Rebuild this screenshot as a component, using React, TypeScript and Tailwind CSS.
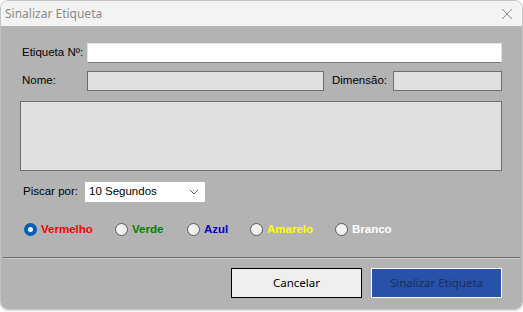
import React from 'react';

const labelFont = { fontFamily: '"Liberation Sans", Arial, sans-serif' };
const uiFont = { fontFamily: '"Noto Sans", "Open Sans", sans-serif' };

type Cor = { nome: string; cor: string; largura: string; marcado?: boolean };

const cores: Cor[] = [
  { nome: 'Vermelho', cor: 'text-[#ff0000]', largura: 'w-[91px]', marcado: true },
  { nome: 'Verde', cor: 'text-[#008000]', largura: 'w-[72px]' },
  { nome: 'Azul', cor: 'text-[#0000c8]', largura: 'w-[63px]' },
  { nome: 'Amarelo', cor: 'text-[#ffff00]', largura: 'w-[85px]' },
  { nome: 'Branco', cor: 'text-white', largura: 'w-[80px]' },
];

function Radio({ marcado }: { marcado?: boolean }): React.ReactElement {
  if (marcado) {
    return (
      <span className="flex h-[13px] w-[13px] items-center justify-center rounded-full bg-[#005fb8]">
        <span className="h-[5px] w-[5px] rounded-full bg-white" />
      </span>
    );
  }
  return <span className="h-[13px] w-[13px] rounded-full border border-[#5a5a5a] bg-[#f0f0f0]" />;
}

export default function App(): React.ReactElement {
  return (
    <div className="h-[312px] w-[523px] bg-white">
      <div className="flex h-[310px] w-[523px] flex-col overflow-hidden rounded-[8px] border border-[#c4c4c4] shadow-[0_1px_2px_rgba(0,0,0,0.15)]">
        {/* barra de título */}
        <div className="flex h-[25px] shrink-0 items-center justify-between bg-[#f3f3f3] pl-[4px] pr-[9px]">
          <span className="text-[12px] text-[#8a8a8a]" style={uiFont}>
            Sinalizar Etiqueta
          </span>
          <svg width="12" height="12" viewBox="0 0 12 12" className="mt-[1px]">
            <path d="M1 1 L11 11 M11 1 L1 11" stroke="#8a8a8a" strokeWidth="1" />
          </svg>
        </div>

        <div className="flex flex-1 flex-col bg-[#b3b3b3] text-[11.5px] text-black" style={labelFont}>
          <div className="flex flex-col pl-[19px] pr-[20px] pt-[17px]">
            <div className="flex h-[20px] items-center pl-[2px]">
              <span className="w-[65px]">Etiqueta Nº:</span>
              <div className="h-[20px] flex-1 border border-[#e2e2e2] border-b-[#7a7a7a] bg-white" />
            </div>

            <div className="mt-[8px] flex h-[20px] items-center pl-[2px]">
              <span className="w-[65px]">Nome:</span>
              <div className="h-[20px] w-[237px] border border-[#6e6e6e] bg-[#e0e0e0]" />
              <span className="ml-[8px] w-[61px]">Dimensão:</span>
              <div className="h-[20px] flex-1 border border-[#6e6e6e] bg-[#e0e0e0]" />
            </div>

            <div className="mt-[10px] h-[70px] border border-[#6e6e6e] bg-[#e0e0e0]" />

            <div className="mt-[11px] flex h-[20px] items-center pl-[3px]">
              <span className="w-[62px]">Piscar por:</span>
              <div className="flex h-[20px] w-[120px] items-center justify-between bg-white pl-[4px] pr-[6px]">
                <span>10 Segundos</span>
                <svg width="10" height="6" viewBox="0 0 10 6">
                  <path d="M1 1 L5 5 L9 1" fill="none" stroke="#606060" strokeWidth="1" />
                </svg>
              </div>
            </div>

            <div className="mt-[21px] flex h-[13px] items-center pl-[4px]">
              {cores.map((c) => (
                <div key={c.nome} className={`flex items-center ${c.largura}`}>
                  <Radio marcado={c.marcado} />
                  <span className={`ml-[4px] font-bold ${c.cor}`}>{c.nome}</span>
                </div>
              ))}
            </div>
          </div>

          <div className="mx-[2px] mt-[21px] border-t border-b border-t-[#6f6f6f] border-b-[#c6c6c6]" />

          <div className="flex justify-end gap-[9px] pr-[20px] pt-[9px]" style={uiFont}>
            <button className="h-[30px] w-[131px] border border-black bg-[#efefef] text-[11.5px] text-black">
              Cancelar
            </button>
            <button className="h-[30px] w-[131px] border border-white bg-[#2852a8] text-[11.5px] text-[#1b2d5c]">
              Sinalizar Etiqueta
            </button>
          </div>
        </div>
      </div>
    </div>
  );
}
